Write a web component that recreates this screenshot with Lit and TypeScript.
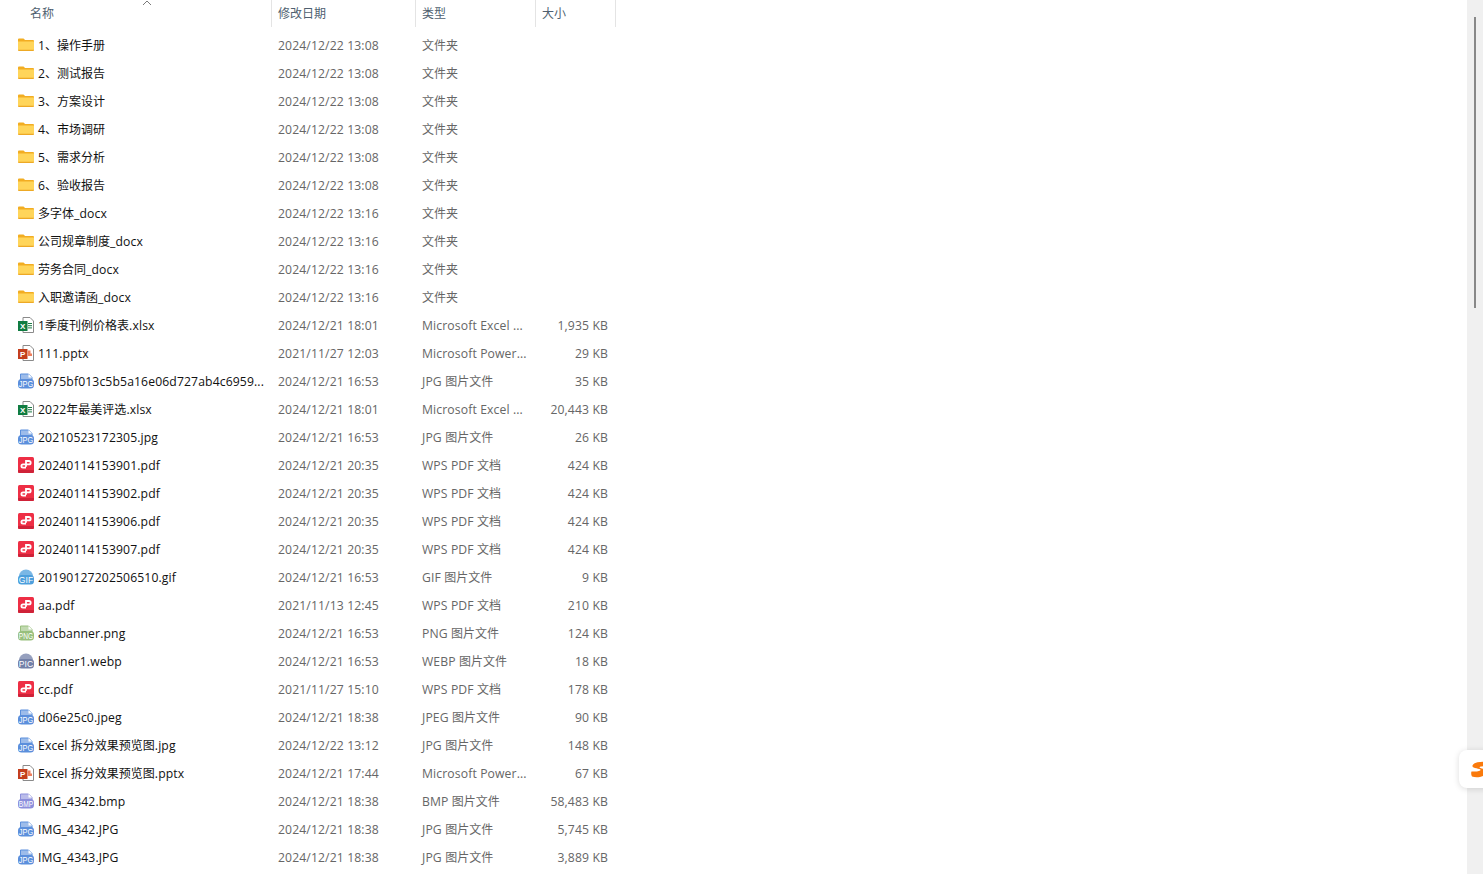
import { LitElement, html, css, svg } from "lit";
import { customElement } from "lit/decorators.js";

type Kind = "folder" | "xls" | "ppt" | "jpg" | "pdf" | "gif" | "png" | "pic" | "bmp";
type Row = [Kind, string, string, string, string];

const F = "文件夹";
const XL = "Microsoft Excel ...";
const PP = "Microsoft Power...";
const J = "JPG 图片文件";
const P = "WPS PDF 文档";

const rows: Row[] = [
  ["folder", "1、操作手册", "2024/12/22 13:08", F, ""],
  ["folder", "2、测试报告", "2024/12/22 13:08", F, ""],
  ["folder", "3、方案设计", "2024/12/22 13:08", F, ""],
  ["folder", "4、市场调研", "2024/12/22 13:08", F, ""],
  ["folder", "5、需求分析", "2024/12/22 13:08", F, ""],
  ["folder", "6、验收报告", "2024/12/22 13:08", F, ""],
  ["folder", "多字体_docx", "2024/12/22 13:16", F, ""],
  ["folder", "公司规章制度_docx", "2024/12/22 13:16", F, ""],
  ["folder", "劳务合同_docx", "2024/12/22 13:16", F, ""],
  ["folder", "入职邀请函_docx", "2024/12/22 13:16", F, ""],
  ["xls", "1季度刊例价格表.xlsx", "2024/12/21 18:01", XL, "1,935 KB"],
  ["ppt", "111.pptx", "2021/11/27 12:03", PP, "29 KB"],
  ["jpg", "0975bf013c5b5a16e06d727ab4c6959...", "2024/12/21 16:53", J, "35 KB"],
  ["xls", "2022年最美评选.xlsx", "2024/12/21 18:01", XL, "20,443 KB"],
  ["jpg", "20210523172305.jpg", "2024/12/21 16:53", J, "26 KB"],
  ["pdf", "20240114153901.pdf", "2024/12/21 20:35", P, "424 KB"],
  ["pdf", "20240114153902.pdf", "2024/12/21 20:35", P, "424 KB"],
  ["pdf", "20240114153906.pdf", "2024/12/21 20:35", P, "424 KB"],
  ["pdf", "20240114153907.pdf", "2024/12/21 20:35", P, "424 KB"],
  ["gif", "20190127202506510.gif", "2024/12/21 16:53", "GIF 图片文件", "9 KB"],
  ["pdf", "aa.pdf", "2021/11/13 12:45", P, "210 KB"],
  ["png", "abcbanner.png", "2024/12/21 16:53", "PNG 图片文件", "124 KB"],
  ["pic", "banner1.webp", "2024/12/21 16:53", "WEBP 图片文件", "18 KB"],
  ["pdf", "cc.pdf", "2021/11/27 15:10", P, "178 KB"],
  ["jpg", "d06e25c0.jpeg", "2024/12/21 18:38", "JPEG 图片文件", "90 KB"],
  ["jpg", "Excel 拆分效果预览图.jpg", "2024/12/22 13:12", J, "148 KB"],
  ["ppt", "Excel 拆分效果预览图.pptx", "2024/12/21 17:44", PP, "67 KB"],
  ["bmp", "IMG_4342.bmp", "2024/12/21 18:38", "BMP 图片文件", "58,483 KB"],
  ["jpg", "IMG_4342.JPG", "2024/12/21 18:38", J, "5,745 KB"],
  ["jpg", "IMG_4343.JPG", "2024/12/21 18:38", J, "3,889 KB"],
];

// CJK runs are set at a slightly smaller size than the Latin runs around them.
function segs(text: string) {
  return text
    .split(/([\u3000-\u9fff]+)/)
    .map((part, i) => (i % 2 ? html`<span class="cjk">${part}</span>` : part));
}

function badge(color: string, label: string, round = false) {
  const top = round
    ? svg`<circle cx="8" cy="7.500" r="7" fill="${color}" opacity="0.75"/>`
    : svg`<path d="M2.500 1h8l3.500 3.500v7H2.500z" fill="${color}" fill-opacity=".6" stroke="${color}" stroke-width="1"/><path d="M10.500 1v3.500h3.500z" fill="#fff"/>`;
  return svg`${top}
    <rect x="0" y="6" width="16" height="9.500" rx="3.500" fill="${color}"/>
    <text x="0.8" y="14" font-size="9" font-weight="400" fill="#fff" font-family="'Liberation Sans',sans-serif" textLength="14.500" lengthAdjust="spacingAndGlyphs">${label}</text>`;
}

function icon(k: Kind) {
  let body;
  switch (k) {
    case "folder":
      body = svg`<path d="M0 2.500a1 1 0 0 1 1-1h4.500l1.600 1.600H15a1 1 0 0 1 1 1V6H0z" fill="#f2ad22"/>
        <path d="M0 4.400h16v8.200a1 1 0 0 1-1 1H1a1 1 0 0 1-1-1z" fill="#ffd55a"/>
        <path d="M0 12.700v.2a1 1 0 0 0 1 1h14a1 1 0 0 0 1-1v-.2z" fill="#eda925"/>`;
      break;
    case "xls":
      body = svg`<path d="M5 .5h7l3.500 3.500v11.500H5z" fill="#fff" stroke="#8a8a8a"/>
        <path d="M10 6.500h4M10 8.700h4M10 10.900h4" stroke="#1d7a45"/>
        <rect x="0" y="4" width="9.500" height="10" fill="#107c41"/>
        <text x="4.800" y="12" text-anchor="middle" font-size="8" font-weight="700" fill="#fff" font-family="'Liberation Sans',sans-serif">X</text>`;
      break;
    case "ppt":
      body = svg`<path d="M5 .5h7l3.500 3.500v11.500H5z" fill="#fff" stroke="#8a8a8a"/>
        <path d="M10 5.500h2.500v3H14v2.500h-4z" fill="#ed7d5c"/>
        <rect x="0" y="4" width="9.500" height="10" fill="#c43e1c"/>
        <text x="4.800" y="12" text-anchor="middle" font-size="8" font-weight="700" fill="#fff" font-family="'Liberation Sans',sans-serif">P</text>`;
      break;
    case "pdf":
      body = svg`<rect x="0" y="0" width="16" height="16" rx="1.500" fill="#ee2f45"/>
        <path d="M0 13h16v1.500a1.500 1.500 0 0 1-1.500 1.500h-13A1.500 1.500 0 0 1 0 14.500z" fill="#cf2238"/>
        <path d="M8 9.800V4h3a1.700 1.700 0 0 1 0 3.400H5a1.500 1.500 0 0 0 0 3.200h3" fill="none" stroke="#fff" stroke-width="1.800"/>`;
      break;
    case "jpg":
      body = badge("#5b8fdc", "JPG");
      break;
    case "gif":
      body = badge("#4d9fdc", "GIF", true);
      break;
    case "png":
      body = badge("#98bf7c", "PNG");
      break;
    case "pic":
      body = badge("#7380a8", "PIC", true);
      break;
    case "bmp":
      body = badge("#8c8fdc", "BMP");
      break;
  }
  return html`<svg class="ico" width="16" height="16" viewBox="0 0 16 16">${body}</svg>`;
}

@customElement("app-root")
export class AppRoot extends LitElement {
  static styles = css`
    :host {
      display: flex;
      width: 100%;
      height: 874px;
      overflow: hidden;
      position: relative;
      background: #fff;
      font-family: "Open Sans", "Noto Sans CJK SC", sans-serif;
      font-size: 12.2px;
      letter-spacing: 0.12px;
    }
    .cjk {
      font-size: 12px;
      letter-spacing: 0;
    }
    .main {
      flex: 1;
      min-width: 0;
    }
    .head,
    .row {
      display: grid;
      grid-template-columns: 272px 144px 120px 80px;
      width: 616px;
    }
    .head {
      height: 27px;
      margin-bottom: 4px;
      color: #4f5f70;
      align-items: stretch;
    }
    .hc {
      position: relative;
      display: flex;
      align-items: center;
      padding-left: 6px;
      border-right: 1px solid #e4e4e4;
      line-height: 27px;
    }
    .hc.first {
      padding-left: 30px;
    }
    .caret {
      position: absolute;
      left: 142px;
      top: 0;
    }
    .row {
      height: 28px;
      line-height: 28px;
      align-items: center;
      white-space: nowrap;
    }
    .name {
      display: flex;
      align-items: center;
      padding-left: 18px;
      gap: 4px;
      color: #111;
    }
    .label {
      padding-top: 1px;
    }
    .ico {
      flex: none;
      overflow: visible;
      margin-bottom: 2px;
    }
    .date,
    .type {
      padding: 1px 0 0 6px;
      color: #666;
    }
    .size {
      text-align: right;
      padding: 1px 8px 0 0;
      color: #666;
    }
    .track {
      flex: none;
      width: 16px;
      background: #f0f0f0;
      padding: 17px 0 0 7px;
      box-sizing: border-box;
    }
    .thumb {
      width: 2px;
      height: 291px;
      background: #888;
    }
    .widget {
      position: absolute;
      left: 1459px;
      top: 750px;
      width: 40px;
      height: 38px;
      background: #fff;
      border-radius: 8px;
      box-shadow: 0 1px 6px rgba(0, 0, 0, 0.14);
      overflow: hidden;
    }
    .widget svg {
      position: absolute;
      left: 12px;
      top: 11px;
    }
  `;

  render() {
    return html`
      <div class="main">
        <div class="head">
          <div class="hc first"><span class="cjk">名称</span>
            <svg class="caret" width="10" height="6" viewBox="0 0 10 6"><path d="M1 5l4-4 4 4" fill="none" stroke="#7a7a7a" stroke-width="1"/></svg>
          </div>
          <div class="hc"><span class="cjk">修改日期</span></div>
          <div class="hc"><span class="cjk">类型</span></div>
          <div class="hc"><span class="cjk">大小</span></div>
        </div>
        ${rows.map(
          ([k, n, d, t, s]) => html`<div class="row">
            <div class="name">${icon(k)}<span class="label">${segs(n)}</span></div>
            <div class="date">${d}</div>
            <div class="type">${segs(t)}</div>
            <div class="size">${s}</div>
          </div>`
        )}
      </div>
      <div class="track"><div class="thumb"></div></div>
      <div class="widget">
        <svg width="20" height="17" viewBox="0 0 20 17"><path d="M17 1C10 0 3 1 1.500 4.500 .5 8 10 7 9.500 9 9 10.500 3 10.800 .5 10.500 0 11.500 0 14 1 15.500c5 1.500 13 .5 15-4.500 1-3.500-8-3-7.500-4.800C9 5 14 5 17 5z" fill="#fa7a0c"/></svg>
      </div>
    `;
  }
}
